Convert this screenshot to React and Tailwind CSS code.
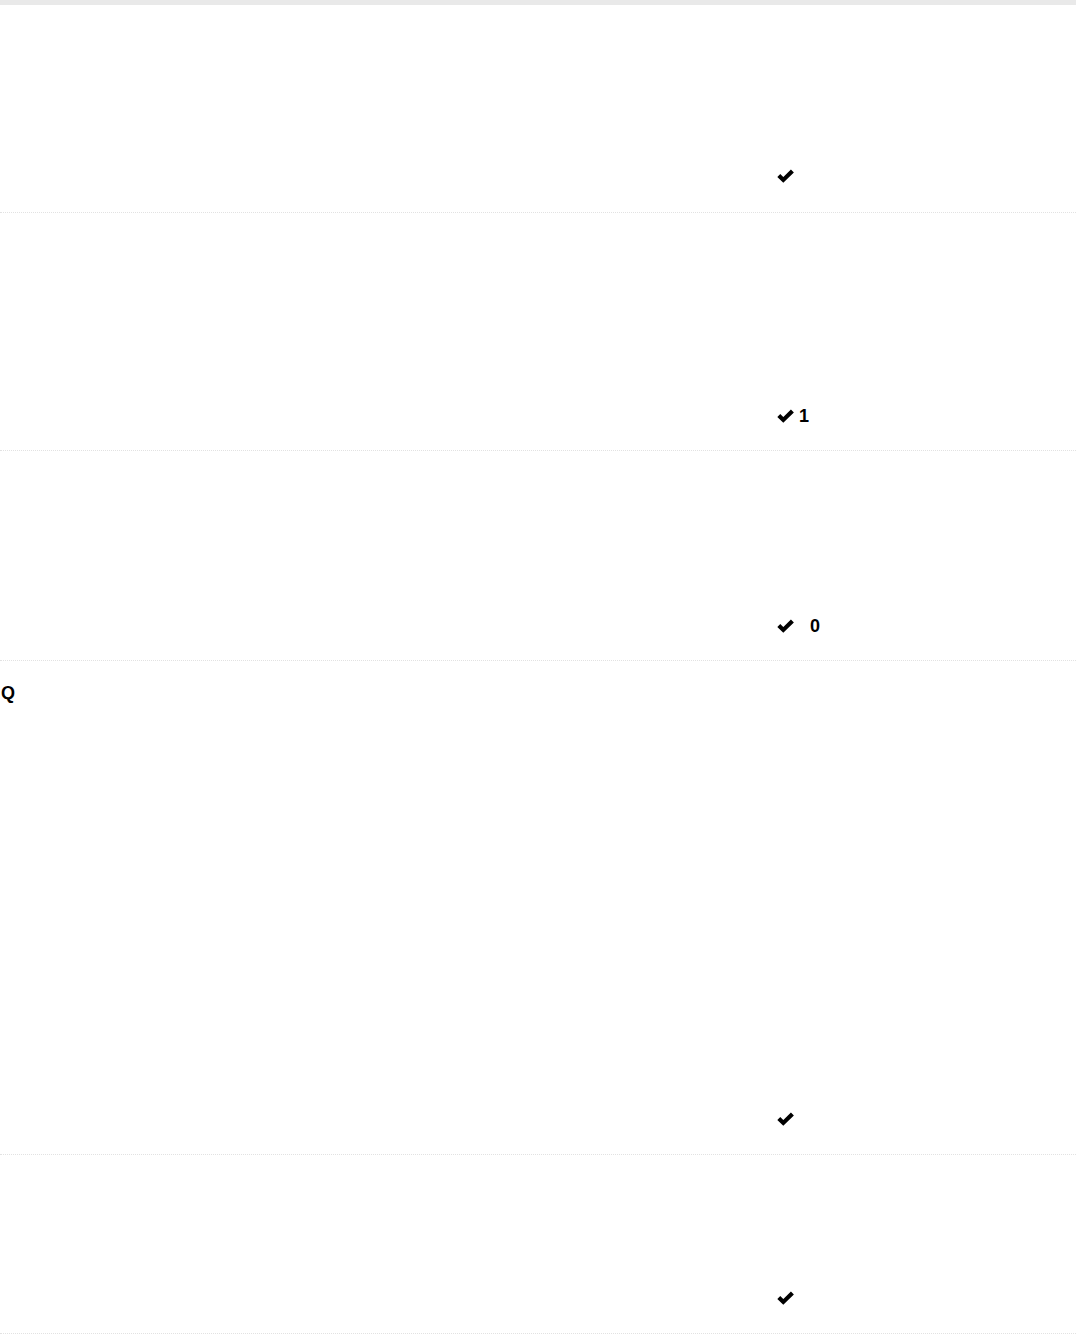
import React from "react";

const rows = [
	{ h: "h-[208px]", pb: "pb-[29px]" },
	{ h: "h-[238px]", pb: "pb-[27px]", count: "1", gap: "ml-[5px]" },
	{ h: "h-[210px]", pb: "pb-[27px]", count: "0", gap: "ml-[16px]" },
	{ h: "h-[494px]", pb: "pb-[28px]", title: "Q" },
	{ h: "h-[179px]", pb: "pb-[28px]" },
];

function Check() {
	return (
		<svg width="17" height="14" viewBox="0 0 17 14" className="block shrink-0">
			<path
				d="M1.8 6.4 L6.3 10.9 L15.4 2"
				fill="none"
				stroke="#000"
				strokeWidth="4.2"
				strokeLinejoin="miter"
			/>
		</svg>
	);
}

function Row({ h, pb, count, gap, title }) {
	return (
		<div className={`flex w-full ${h} border-b border-dotted border-[#e2e2e2]`}>
			<div className="w-[777px] pt-[18px] pl-[1px]">
				{title && <span className="text-lg font-bold text-black">{title}</span>}
			</div>
			<div className={`flex flex-1 items-end ${pb}`}>
				<Check />
				{count && (
					<span className={`${gap} text-lg leading-[14px] font-bold text-black`}>
						{count}
					</span>
				)}
			</div>
		</div>
	);
}

export default function App() {
	return (
		<div className="w-[1076px] min-h-[1334px] bg-white font-['Liberation_Sans',Arial,sans-serif]">
			<div className="h-[5px] w-full bg-[#e9e9e9]" />
			{rows.map((r, i) => (
				<Row key={i} {...r} />
			))}
		</div>
	);
}
